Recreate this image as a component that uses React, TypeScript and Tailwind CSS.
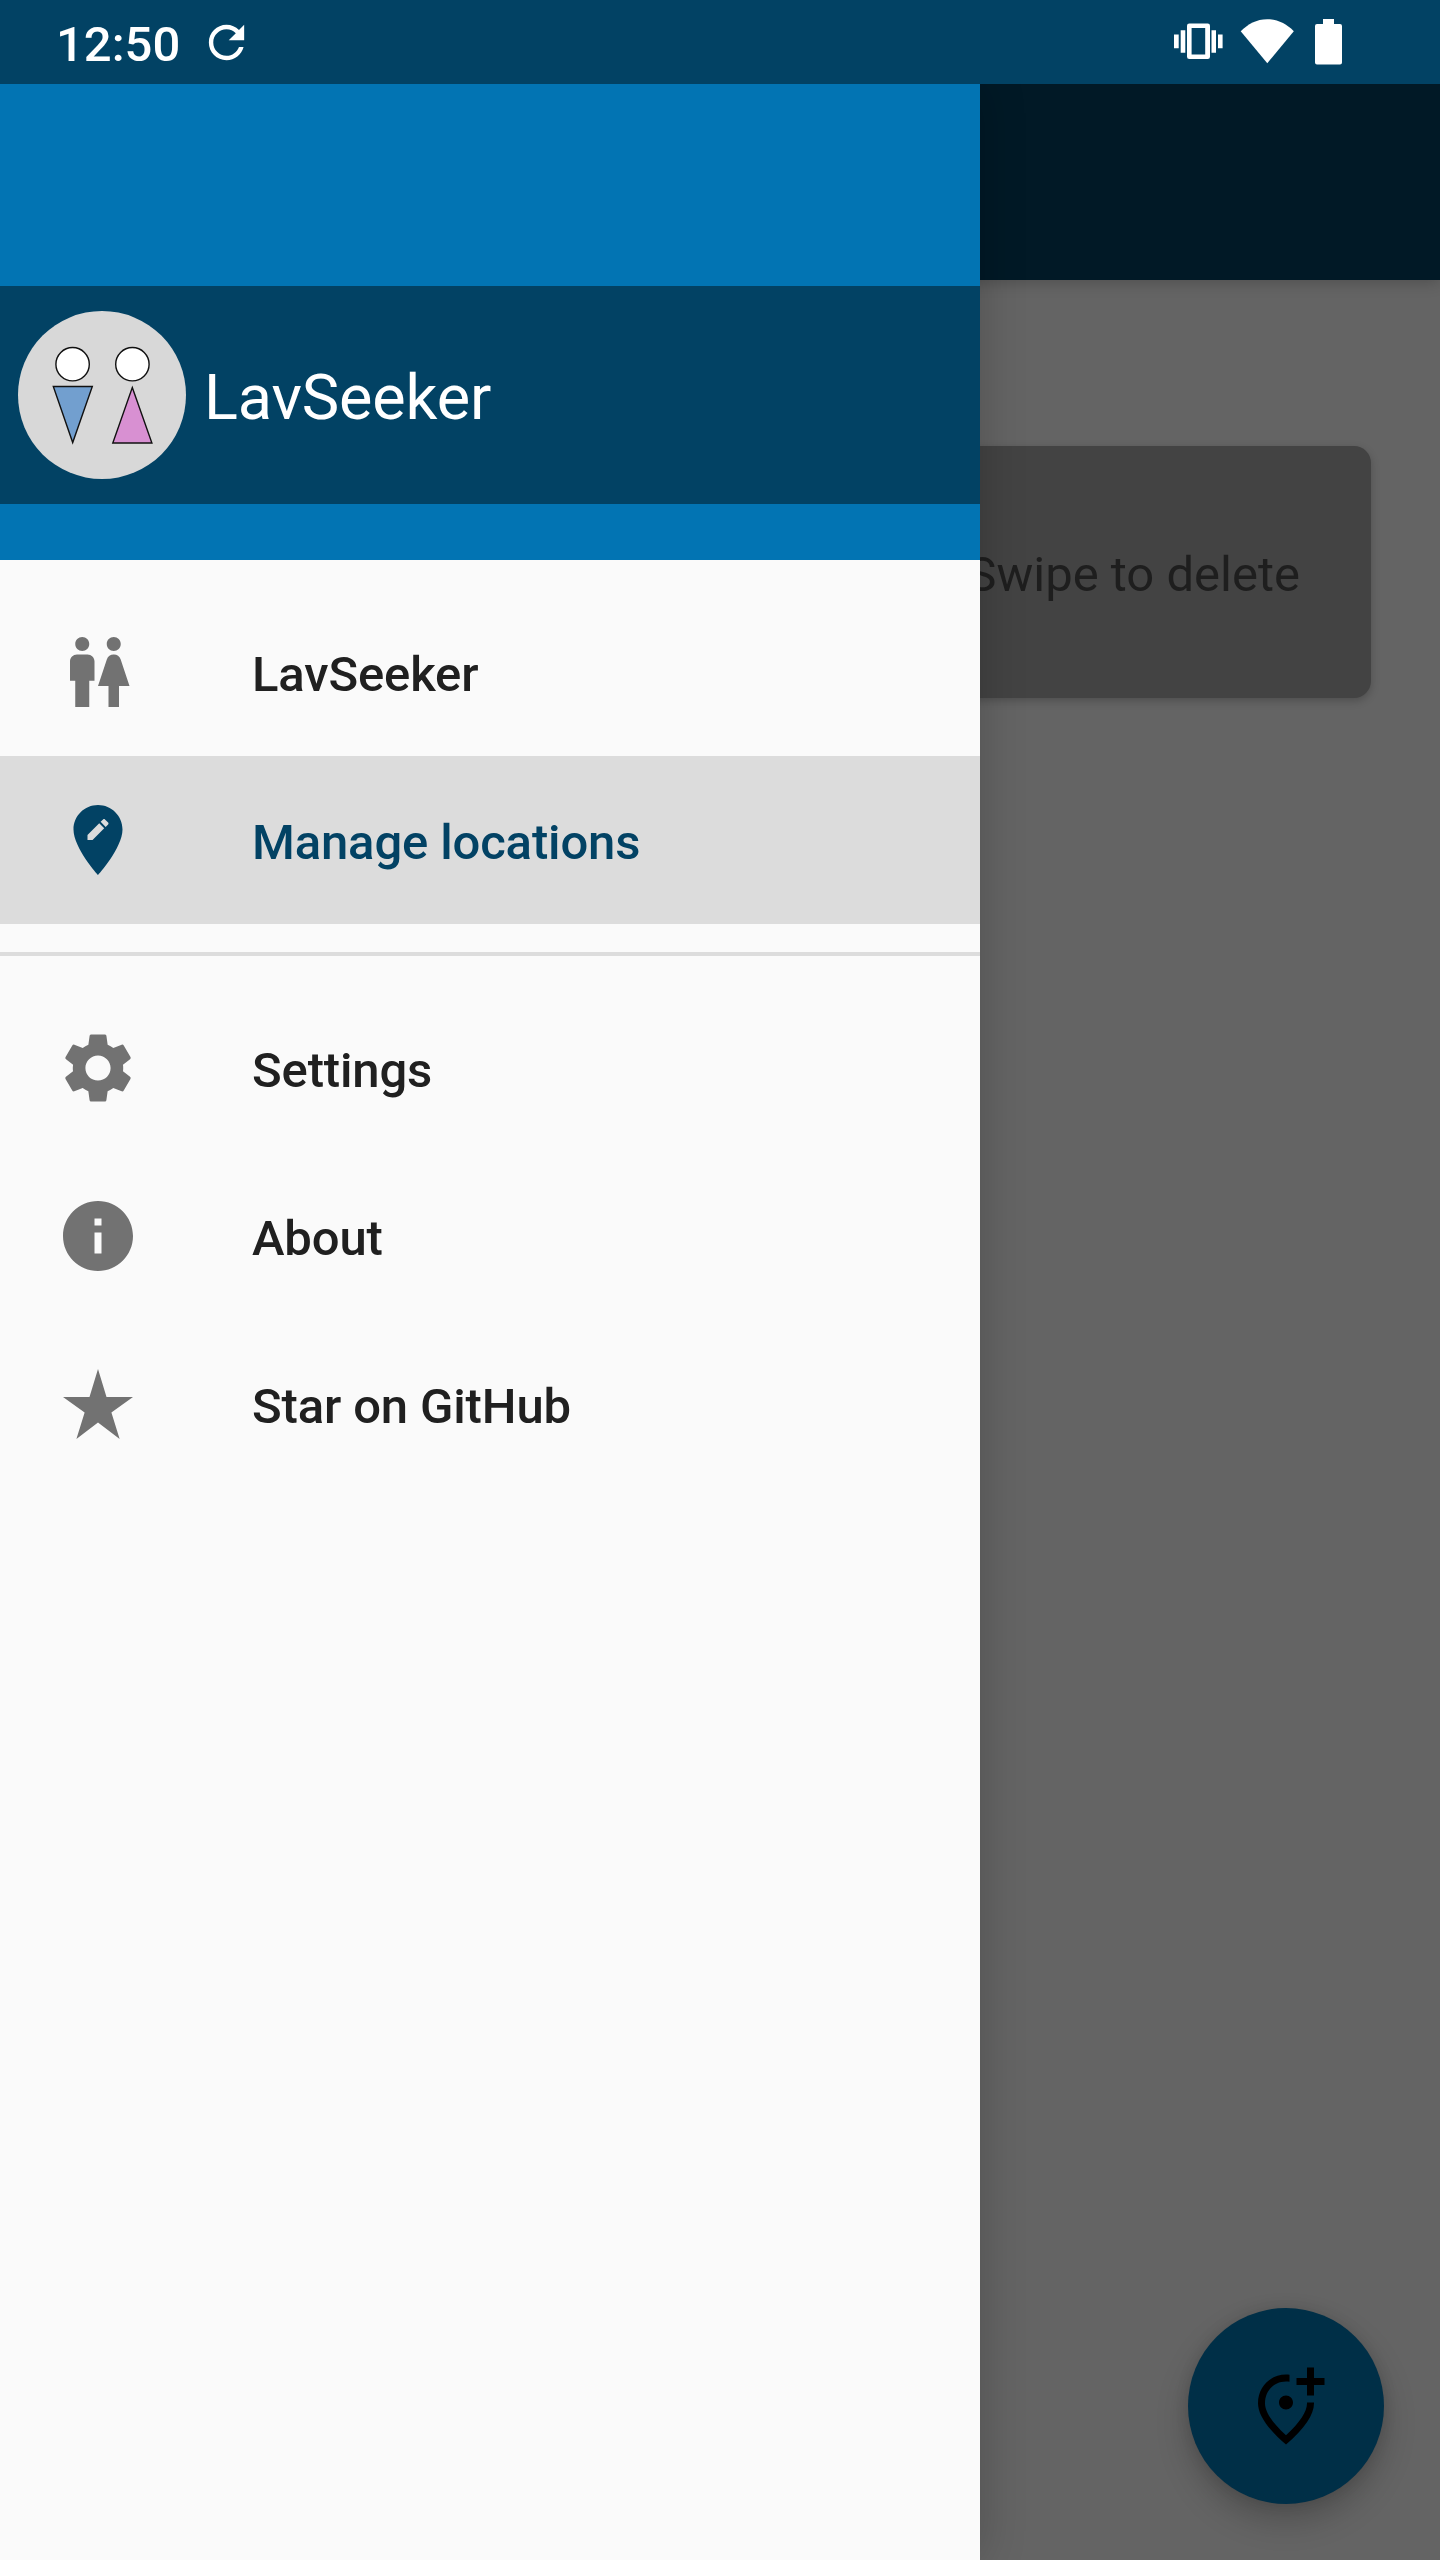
import type { ReactNode } from "react";

const REFRESH =
  "M17.65 6.35C16.2 4.9 14.21 4 12 4c-4.42 0-7.99 3.58-7.99 8s3.57 8 7.99 8c3.73 0 6.84-2.55 7.73-6h-2.08c-.82 2.33-3.04 4-5.65 4-3.31 0-6-2.69-6-6s2.69-6 6-6c1.66 0 3.14.69 4.22 1.78L13 11h7V4l-2.35 2.35z";
const WC =
  "M5.5 22v-7.5H4V9c0-1.1.9-2 2-2h3c1.1 0 2 .9 2 2v5.500H9.500V22h-4zM18 22v-6h3l-2.54-7.63C18.18 7.55 17.42 7 16.56 7h-.12c-.86 0-1.63.55-1.9 1.37L12 16h3v6h3zM7.5 6c1.11 0 2-.89 2-2s-.89-2-2-2-2 .89-2 2 .89 2 2 2zm9 0c1.11 0 2-.89 2-2s-.89-2-2-2-2 .89-2 2 .89 2 2 2z";
const EDIT_LOCATION =
  "M12 2C8.14 2 5 5.14 5 9c0 5.25 7 13 7 13s7-7.75 7-13c0-3.86-3.14-7-7-7zm-1.56 10H9v-1.44l3.35-3.34 1.43 1.43L10.44 12zm4.45-4.45l-.7.7-1.44-1.44.7-.7c.15-.15.39-.15.54 0l.9.9c.15.15.15.39 0 .54z";
const SETTINGS =
  "M19.14 12.94c.04-.3.06-.61.06-.94 0-.32-.02-.64-.07-.94l2.03-1.58c.18-.14.23-.41.12-.61l-1.92-3.32c-.12-.22-.37-.29-.59-.22l-2.39.96c-.5-.38-1.03-.7-1.62-.94L14.4 2.81c-.04-.24-.24-.41-.48-.41h-3.84c-.24 0-.43.17-.47.41L9.25 5.35c-.59.24-1.13.57-1.62.94l-2.39-.96c-.22-.08-.47 0-.59.22L2.74 8.87c-.12.21-.08.47.12.61l2.03 1.58c-.05.3-.09.63-.09.94s.02.64.07.94l-2.03 1.58c-.18.14-.23.41-.12.61l1.92 3.32c.12.22.37.29.59.22l2.39-.96c.5.38 1.03.7 1.62.94l.36 2.54c.05.24.24.41.48.41h3.84c.24 0 .44-.17.47-.41l.36-2.54c.59-.24 1.13-.56 1.62-.94l2.39.96c.22.08.47 0 .59-.22l1.92-3.32c.12-.22.07-.47-.12-.61l-2.01-1.58zM12 15.6c-1.98 0-3.6-1.62-3.6-3.6s1.62-3.6 3.6-3.6 3.6 1.62 3.6 3.6-1.62 3.6-3.6 3.6z";
const INFO =
  "M12 2C6.48 2 2 6.48 2 12s4.48 10 10 10 10-4.48 10-10S17.52 2 12 2zm1 15h-2v-6h2v6zm0-8h-2V7h2v2z";
const STAR =
  "M14.43 10 12 2l-2.43 8H2l6.18 4.41L5.83 22 12 17.31 18.18 22l-2.35-7.59L22 10z";
const ADD_LOCATION =
  "M20 1v3h3v2h-3v3h-2V6h-3V4h3V1h2zm-8 12c1.1 0 2-.9 2-2s-.9-2-2-2-2 .9-2 2 .9 2 2 2zm1-9.94C12.67 3.02 12.34 3 12 3c-4.2 0-8 3.22-8 8.2 0 3.3 2.67 7.22 8 11.8 5.33-4.58 8-8.5 8-11.8V11h-2v.2c0 2.34-1.95 5.44-6 9.14-4.05-3.7-6-6.79-6-9.14C6 7.57 8.65 5 12 5c.34 0 .67.03 1 .08V3.06z";

function Icon({ d }: { d: string }) {
  return (
    <svg viewBox="0 0 24 24" className="size-21 shrink-0 fill-current">
      <path d={d} />
    </svg>
  );
}

function StatusBar() {
  return (
    <header className="relative z-10 flex h-21 shrink-0 items-center bg-[#024264] pr-[98px] pl-14 text-white">
      <span className="w-[144px] pt-[5px] text-[49px] leading-none font-medium">12:50</span>
      <svg viewBox="0 0 24 24" className="size-[53px] shrink-0 fill-current">
        <path d={REFRESH} />
      </svg>
      <div className="ml-auto flex h-full">
        <svg viewBox="0 0 50 84" className="h-21 w-[50px] overflow-visible fill-current">
          <path
            fillRule="evenodd"
            d="M17.3 23.5h18.4a2.3 2.3 0 0 1 2.3 2.3v31a2.3 2.3 0 0 1-2.3 2.3H17.3a2.3 2.3 0 0 1-2.3-2.3v-31a2.3 2.3 0 0 1 2.3-2.3zM19.6 28v26.6h13.6V28z"
          />
          <path d="M8.7 30.3h4.6v22.4H8.7zM2 34.5h4.7v13.800H2zM39.500 30.300h4.500v22.400h-4.500zM46 34.500h4.600v13.800H46z" />
        </svg>
        <svg viewBox="0 0 54 84" className="ml-[18px] h-21 w-[54px] fill-current">
          <path d="M.7 31.300C7.700 24 16.700 19.200 27.200 19.200S46.800 24 53.800 31.300L27.300 63.300z" />
        </svg>
        <svg viewBox="0 0 28 84" className="ml-[20px] h-21 w-7 fill-current">
          <path d="M9 19h11v5h6a2 2 0 0 1 2 2v36.600a2 2 0 0 1-2 2H3a2 2 0 0 1-2-2V26a2 2 0 0 1 2-2h6z" />
        </svg>
      </div>
    </header>
  );
}

function Avatar() {
  return (
    <svg viewBox="0 0 168 168" className="size-42 shrink-0" stroke="#111" strokeWidth="1.4">
      <circle cx="84" cy="84" r="84" fill="#d8d8d8" stroke="none" />
      <circle cx="54.600" cy="53.200" r="16.700" fill="#fff" />
      <circle cx="114.400" cy="53.200" r="16.700" fill="#fff" />
      <path d="M35.300 75.500h39L54.700 131.500z" fill="#729fcf" />
      <path d="M114.300 76.500 133.900 132H94.800z" fill="#d890d2" />
    </svg>
  );
}

function Item({ d, children, active }: { d: string; children: ReactNode; active?: boolean }) {
  return (
    <li
      className={
        active
          ? "flex h-42 items-center gap-28 bg-[#dcdcdc] pl-14 text-[#024264]"
          : "flex h-42 items-center gap-28 pl-14 text-[#727272]"
      }
    >
      <Icon d={d} />
      <span
        className={
          active
            ? "pt-[5px] text-[49px] leading-none font-medium tracking-[-0.14px]"
            : "pt-[5px] text-[49px] leading-none font-medium tracking-[-0.14px] text-[#202020]"
        }
      >
        {children}
      </span>
    </li>
  );
}

function Drawer() {
  return (
    <nav className="absolute top-21 bottom-0 left-0 w-[980px] bg-[#fafafa] shadow-[0_0_44px_rgba(0,0,0,0.2)]">
      <div className="bg-[#0274b3] pt-[202px] pb-14">
        <div className="flex h-[218px] items-center bg-[#024264] pl-[18px]">
          <Avatar />
          <span className="ml-[18px] pt-[4px] text-[63px] leading-none tracking-[-0.15px] text-white">
            LavSeeker
          </span>
        </div>
      </div>
      <ul className="py-7">
        <Item d={WC}>LavSeeker</Item>
        <Item d={EDIT_LOCATION} active>
          Manage locations
        </Item>
      </ul>
      <hr className="h-1 border-0 bg-[#dcdcdc]" />
      <ul className="pt-7">
        <Item d={SETTINGS}>Settings</Item>
        <Item d={INFO}>About</Item>
        <Item d={STAR}>Star on GitHub</Item>
      </ul>
    </nav>
  );
}

export default function App() {
  return (
    <div className="relative flex h-[2560px] w-[1440px] flex-col overflow-hidden bg-[#646464] font-['Roboto',sans-serif]">
      <StatusBar />
      <div className="h-49 shrink-0 bg-[#011926] shadow-[0_3px_14px_rgba(0,0,0,0.2)]" />
      <main className="px-[69px] pt-[166px]">
        <div className="flex h-[252px] items-center justify-end rounded-[17px] bg-[#434343] pr-[71px] shadow-[0_3px_8px_rgba(0,0,0,0.22)]">
          <span className="pt-[5px] text-[49px] leading-none text-[#1e1e1e]">Swipe to delete</span>
        </div>
      </main>
      <button className="absolute right-14 bottom-14 flex size-49 items-center justify-center rounded-full bg-[#002f47] text-black shadow-[0_16px_32px_rgba(0,0,0,0.22),0_0_14px_rgba(0,0,0,0.1)]">
        <Icon d={ADD_LOCATION} />
      </button>
      <Drawer />
    </div>
  );
}
